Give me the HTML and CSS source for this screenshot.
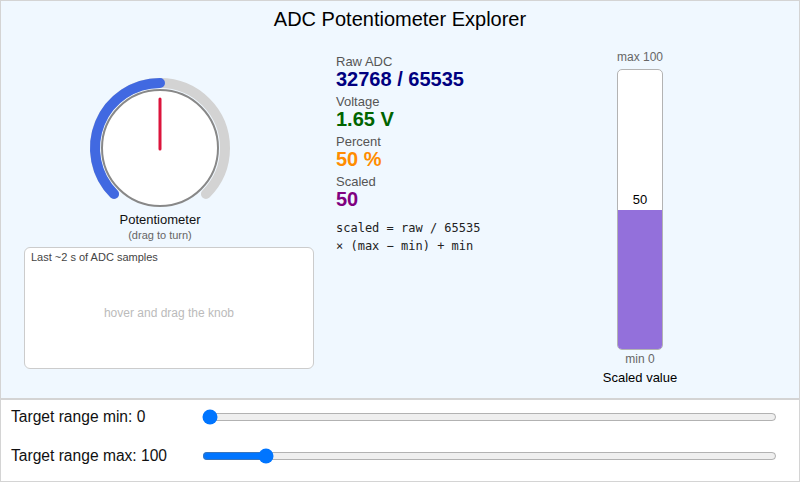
FILE: index.html
```html
<!DOCTYPE html>
<html>
<head>
<meta charset="utf-8">
<link rel="stylesheet" href="styles.css">
</head>
<body>
<div class="app">
  <section class="stage">
    <h1 class="title">ADC Potentiometer Explorer</h1>
    <div class="row">
      <div class="left">
        <div class="knob-wrap">
          <svg class="knob" width="160" height="140" viewBox="0 0 160 140">
            <path d="M34.04 121.96 A65 65 0 1 1 125.96 121.96" fill="none" stroke="#d3d3d3" stroke-width="10" stroke-linecap="round"/>
            <path d="M34.04 121.96 A65 65 0 0 1 80 11" fill="none" stroke="#4169e1" stroke-width="10" stroke-linecap="round"/>
            <circle cx="80" cy="76" r="58" fill="#fff" stroke="#888" stroke-width="2"/>
            <line x1="80" y1="77" x2="80" y2="27" stroke="#dc143c" stroke-width="3" stroke-linecap="round"/>
          </svg>
          <div class="knob-label">Potentiometer</div>
          <div class="knob-hint">(drag to turn)</div>
        </div>
        <div class="chart">
          <div class="chart-title">Last ~2 s of ADC samples</div>
          <div class="chart-empty">hover and drag the knob</div>
        </div>
      </div>
      <div class="readouts">
        <div class="readout">
          <div class="r-label">Raw ADC</div>
          <div class="r-value raw">32768 / 65535</div>
        </div>
        <div class="readout">
          <div class="r-label">Voltage</div>
          <div class="r-value volt">1.65 V</div>
        </div>
        <div class="readout">
          <div class="r-label">Percent</div>
          <div class="r-value pct">50 %</div>
        </div>
        <div class="readout">
          <div class="r-label">Scaled</div>
          <div class="r-value scaled">50</div>
        </div>
        <div class="formula">scaled = raw / 65535<br>× (max − min) + min</div>
      </div>
      <div class="meter">
        <div class="m-cap">max 100</div>
        <div class="bar">
          <div class="bar-fill" style="height:50%"></div>
          <div class="bar-val" style="bottom:50%">50</div>
        </div>
        <div class="m-cap m-min">min 0</div>
        <div class="m-title">Scaled value</div>
      </div>
    </div>
  </section>
  <section class="controls">
    <label class="ctl">
      <span class="ctl-label">Target range min: 0</span>
      <input class="slider" type="range" min="0" max="1000" value="0">
    </label>
    <label class="ctl">
      <span class="ctl-label">Target range max: 100</span>
      <input class="slider" type="range" min="0" max="1000" value="100">
    </label>
  </section>
</div>
</body>
</html>
```

FILE: styles.css
```css
html, body {
  margin: 0;
  padding: 0;
  background: #fff;
}
body {
  font-family: "Liberation Sans", Arial, sans-serif;
  color: #000;
}
.app {
  width: 800px;
  height: 482px;
  display: flex;
  flex-direction: column;
  box-sizing: border-box;
}
.stage {
  height: 399px;
  box-sizing: border-box;
  border: 1px solid #d4d4d4;
  background: #f0f8ff;
}
.title {
  margin: 0;
  height: 35px;
  line-height: 36px;
  font-size: 20px;
  font-weight: normal;
  text-align: center;
}
.row {
  display: flex;
  margin-top: 8px;
}
.left {
  width: 290px;
  margin-left: 23px;
  display: flex;
  flex-direction: column;
}
.knob-wrap {
  width: 272px;
  display: flex;
  flex-direction: column;
  align-items: center;
}
.knob {
  display: block;
  margin-top: 28px;
}
.knob-label {
  margin-top: 0;
  font-size: 13px;
  line-height: 16px;
  color: #111;
}
.knob-hint {
  font-size: 11px;
  line-height: 14px;
  color: #666;
}
.chart {
  margin-top: 5px;
  height: 122px;
  box-sizing: border-box;
  border: 1px solid #ccc;
  border-radius: 6px;
  background: #fff;
  display: flex;
  flex-direction: column;
}
.chart-title {
  font-size: 11px;
  line-height: 14px;
  color: #444;
  padding: 2px 0 0 6px;
}
.chart-empty {
  flex: 1;
  display: flex;
  align-items: center;
  justify-content: center;
  font-size: 12px;
  color: #bbb;
  padding-bottom: 7px;
}
.readouts {
  width: 250px;
  margin-left: 22px;
  padding-top: 9px;
}
.readout {
  padding-bottom: 4px;
}
.r-label {
  padding-top: 2px;
  font-size: 13px;
  line-height: 14px;
  color: #555;
}
.r-value {
  font-size: 20px;
  line-height: 20px;
  font-weight: bold;
}
.raw { color: #000080; }
.volt { color: #006400; }
.pct { color: #ff8c00; }
.scaled { color: #800080; }
.formula {
  margin-top: 6px;
  font-family: "DejaVu Sans Mono", monospace;
  font-size: 12px;
  line-height: 18px;
  color: #222;
}
.meter {
  width: 108px;
  display: flex;
  flex-direction: column;
  align-items: center;
  padding-top: 6px;
}
.m-cap {
  font-size: 12px;
  line-height: 14px;
  color: #666;
}
.bar {
  position: relative;
  margin-top: 5px;
  width: 46px;
  height: 281px;
  box-sizing: border-box;
  border: 1px solid #b3b3b3;
  border-radius: 5px;
  background: #fff;
  display: flex;
  flex-direction: column;
  justify-content: flex-end;
  overflow: hidden;
}
.bar-fill {
  background: #9370db;
}
.bar-val {
  position: absolute;
  left: 0;
  right: 0;
  text-align: center;
  font-size: 13px;
  line-height: 16px;
  margin-bottom: 2px;
}
.m-min {
  margin-top: 2px;
}
.m-title {
  margin-top: 4px;
  font-size: 13px;
  line-height: 16px;
}
.controls {
  flex: 1;
  box-sizing: border-box;
  border: 1px solid #d4d4d4;
  background: #fff;
  padding: 7px 22px 15px 10px;
  display: flex;
  flex-direction: column;
  gap: 19px;
}
.ctl {
  display: flex;
  align-items: center;
  height: 20px;
}
.ctl-label {
  width: 191px;
  font-size: 15.6px;
  color: #111;
}
.slider {
  flex: 1;
  margin: 0;
}
```
